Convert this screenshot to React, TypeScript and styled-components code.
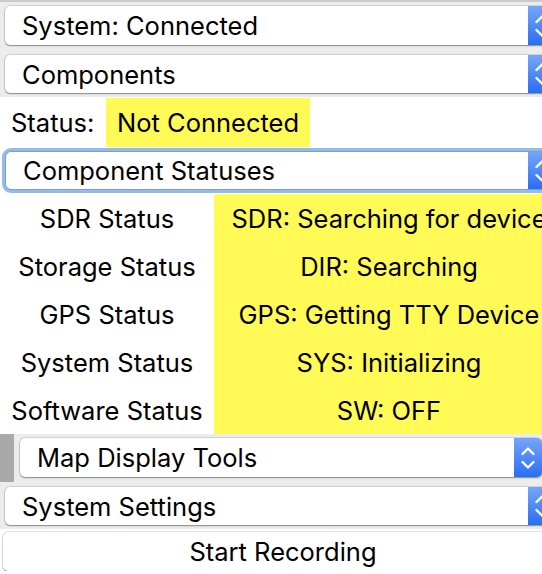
import React from "react";
import styled, { createGlobalStyle } from "styled-components";

const GlobalStyle = createGlobalStyle`
  html, body {
    margin: 0;
    padding: 0;
    background: #ffffff;
    overflow: hidden;
  }
  body {
    font-family: Inter, "Noto Sans", "Liberation Sans", sans-serif;
    color: #000;
  }
`;

const FS = "25.5px";

const Page = styled.div`
  width: 564px;
  display: flex;
  flex-direction: column;
`;

const GrayPanel = styled.div<{ $top?: boolean }>`
  background: #ececec;
  border-top: ${(p) => (p.$top ? "2px solid #cbcbcb" : "none")};
  padding: ${(p) => (p.$top ? "4px 0 4px" : "0 0 4px")};
  display: flex;
  flex-direction: column;
`;

const SelectBox = styled.div<{
  $h?: number;
  $ml?: number;
  $mr?: number;
  $mt?: number;
  $focus?: boolean;
  $grow?: boolean;
}>`
  position: relative;
  box-sizing: border-box;
  height: ${(p) => p.$h ?? 39}px;
  margin: ${(p) => p.$mt ?? 0}px ${(p) => p.$mr ?? 8}px 0 ${(p) => p.$ml ?? 5}px;
  background: #ffffff;
  border-radius: 5px;
  box-shadow: ${(p) =>
    p.$focus
      ? "0 0 0 1px rgba(0,0,0,0.15), 0 0 0 4px #94bbee"
      : "0 0 0 0.5px rgba(0,0,0,0.22), 0 1px 1.5px rgba(0,0,0,0.35)"};
  display: flex;
  align-items: center;
  padding-left: 17px;
  font-size: ${FS};
  white-space: nowrap;
  overflow: hidden;
  flex: ${(p) => (p.$grow ? "1 1 auto" : "none")};
`;

const Stepper = styled.div`
  position: absolute;
  top: 0;
  right: 0;
  bottom: 0;
  width: 28px;
  background: linear-gradient(#76a6f7, #2a6ef6);
  display: flex;
  align-items: center;
  justify-content: center;
`;

const Gap = styled.div<{ $h: number }>`
  height: ${(p) => p.$h}px;
  flex: none;
`;

const StatusRow = styled.div`
  height: 51px;
  display: flex;
  align-items: center;
  font-size: ${FS};
`;

const StatusLabel = styled.span`
  padding-left: 11px;
  width: 95px;
  flex: none;
`;

const Highlight = styled.span`
  background: #fffa55;
  height: 49px;
  display: flex;
  align-items: center;
  padding: 0 11px;
`;

const FocusWrap = styled.div`
  padding: 4px 0 5px;
  display: flex;
  flex-direction: column;
`;

const Table = styled.div`
  display: grid;
  grid-template-columns: 214px 1fr;
  grid-auto-rows: 48px;
  font-size: ${FS};
`;

const Cell = styled.div<{ $yellow?: boolean }>`
  display: flex;
  align-items: center;
  justify-content: center;
  white-space: nowrap;
  background: ${(p) => (p.$yellow ? "#fffa55" : "#ffffff")};
`;

const MapRow = styled.div`
  display: flex;
  height: 48px;
  align-items: flex-start;
`;

const Handle = styled.div`
  width: 14px;
  height: 48px;
  background: #a9a9a9;
  flex: none;
`;

const ButtonWrap = styled.div`
  padding: 3px 1px 0 3px;
`;

const PushButton = styled.div`
  height: 39px;
  background: #ffffff;
  border-radius: 5px;
  box-shadow: 0 0 0 0.5px rgba(0,0,0,0.22), 0 1px 1.5px rgba(0,0,0,0.3);
  display: flex;
  align-items: center;
  justify-content: center;
  font-size: ${FS};
`;

const Chevrons = () => (
  <svg width="16" height="28" viewBox="0 0 16 28" fill="none">
    <path d="M2.5 10 L8 4.5 L13.5 10" stroke="#fff" strokeWidth="2.4" strokeLinecap="round" strokeLinejoin="round" />
    <path d="M2.5 18 L8 23.5 L13.5 18" stroke="#fff" strokeWidth="2.4" strokeLinecap="round" strokeLinejoin="round" />
  </svg>
);

type SelProps = {
  label: string;
  h?: number;
  ml?: number;
  mr?: number;
  mt?: number;
  focus?: boolean;
  grow?: boolean;
};

const Select = ({ label, h, ml, mr, mt, focus, grow }: SelProps) => (
  <SelectBox $h={h} $ml={ml} $mr={mr} $mt={mt} $focus={focus} $grow={grow}>
    {label}
    <Stepper>
      <Chevrons />
    </Stepper>
  </SelectBox>
);

const rows: [string, string][] = [
  ["SDR Status", "SDR: Searching for device"],
  ["Storage Status", "DIR: Searching"],
  ["GPS Status", "GPS: Getting TTY Device"],
  ["System Status", "SYS: Initializing"],
  ["Software Status", "SW: OFF"],
];

export default function App() {
  return (
    <Page>
      <GlobalStyle />
      <GrayPanel $top>
        <Select label="System: Connected" h={39} />
        <Gap $h={10} />
        <Select label="Components" h={38} />
      </GrayPanel>
      <StatusRow>
        <StatusLabel>Status:</StatusLabel>
        <Highlight>Not Connected</Highlight>
      </StatusRow>
      <FocusWrap>
        <Select label="Component Statuses" h={37} ml={6} mr={8} focus />
      </FocusWrap>
      <Table>
        {rows.map(([a, b]) => (
          <React.Fragment key={a}>
            <Cell>{a}</Cell>
            <Cell $yellow>{b}</Cell>
          </React.Fragment>
        ))}
      </Table>
      <GrayPanel>
        <MapRow>
          <Handle />
          <Select label="Map Display Tools" h={39} ml={6} mr={22} mt={4} grow />
        </MapRow>
        <Select label="System Settings" h={38} mt={5} />
      </GrayPanel>
      <ButtonWrap>
        <PushButton>Start Recording</PushButton>
      </ButtonWrap>
    </Page>
  );
}
